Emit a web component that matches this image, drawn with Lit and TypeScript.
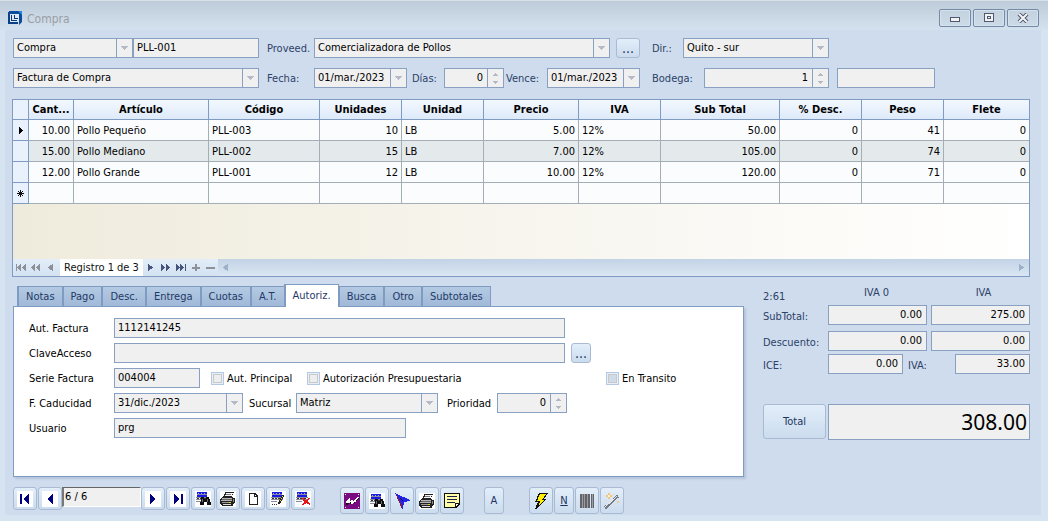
import { LitElement, html, svg, css, nothing } from "lit";
import { customElement } from "lit/decorators.js";
import { classMap } from "lit/directives/class-map.js";

type Row = [string, string, string, string, string, string, string, string, string, string, string];

const COLUMNS = ["Cant...", "Artículo", "Código", "Unidades", "Unidad", "Precio", "IVA", "Sub Total", "% Desc.", "Peso", "Flete"];
const WIDTHS = [45, 135, 111, 82, 82, 95, 82, 119, 82, 82, 85];
const NUMERIC = new Set([0, 3, 5, 7, 8, 9, 10]);
const ROWS: Row[] = [
  ["10.00", "Pollo Pequeño", "PLL-003", "10", "LB", "5.00", "12%", "50.00", "0", "41", "0"],
  ["15.00", "Pollo Mediano", "PLL-002", "15", "LB", "7.00", "12%", "105.00", "0", "74", "0"],
  ["12.00", "Pollo Grande", "PLL-001", "12", "LB", "10.00", "12%", "120.00", "0", "71", "0"],
];
const TABS = ["Notas", "Pago", "Desc.", "Entrega", "Cuotas", "A.T.", "Autoriz.", "Busca", "Otro", "Subtotales"];

const icon = (w: number, h: number, body: unknown) =>
  html`<svg width=${w} height=${h} viewBox="0 0 ${w} ${h}" shape-rendering="crispEdges" aria-hidden="true">${body}</svg>`;

const down = icon(7, 4, svg`<path d="M0 0h7v1H6v1H5v1H4v1H3V3H2V2H1V1H0z" fill="#b4bac8"/>`);
const tinyUp = icon(5, 3, svg`<path d="M2 0h1v1h1v1h1v1H0V2h1V1h1z" fill="#b4b8c4"/>`);
const tinyDown = icon(5, 3, svg`<path d="M0 0h5v1H4v1H3v1H2V2H1V1H0z" fill="#b4b8c4"/>`);

const grid = svg`<path d="M2 1h10v5H2z" fill="#1a1ae6"/><path d="M2 6h10v5H2z" fill="#fff"/><path d="M2 3h10v1H2zM1 6h12v1H1zM1 8h12v1H1zM1 10h6v1H1z" fill="#8a8a98"/><path d="M3 2h1v1H3zM6 2h1v1H6zM9 2h1v1H9z" fill="#9fb0ff"/><path d="M2 7h2v1H2zM5 7h2v1H5zM8 7h3v1H8z" fill="#333"/>`;
const sheet = svg`<path d="M0 0h16v16H0z" fill="#fff"/>`;
const binoculars = svg`<path d="M6 6h3v2h2V6h3v2h1v3h1v3h-4v-3h-3v3H5v-3h1z" fill="#101010"/><path d="M7 8h1v3H7zM12 8h1v3h-1z" fill="#6c6c6c"/>`;
const printer = svg`<path d="M5 1h9v1h-1v2h-1v2H3V5h1V3h1z" fill="#222"/><path d="M6 2h7v1h-1v2H5V4h1z" fill="#f4f4f4"/><path d="M6 3h5v1H6z" fill="#777"/><path d="M2 6h11v1h2v5h-1v1h-1v2H2v-1H1v-1H0V8h1V7h1z" fill="#222"/><path d="M2 7h10v1H2zM1 9h11v1H1z" fill="#b5b5b5"/><path d="M2 8h10v1H2z" fill="#666"/><path d="M2 11h9v1H2z" fill="#999"/><path d="M3 13h8v1H3z" fill="#ddd"/><path d="M13 8h1v3h-1z" fill="#888"/><path d="M9 11h2v1H9z" fill="#e0dc20"/>`;

const ICONS: Record<string, unknown> = {
  first: svg`${sheet}<path d="M3 3h2v10H3zM11 3h1v10h-1v-1h-1v-1H9v-1H8V9H7V7h1V6h1V5h1V4h1z" fill="#000080"/>`,
  prev: svg`${sheet}<path d="M10 3h1v10h-1v-1H9v-1H8v-1H7V9H6V7h1V6h1V5h1V4h1z" fill="#000080"/>`,
  next: svg`${sheet}<path d="M5 3h1v1h1v1h1v1h1v1h1v2H9v1H8v1H7v1H6v1H5z" fill="#000080"/>`,
  last: svg`${sheet}<path d="M4 3h1v1h1v1h1v1h1v1h1v2H8v1H7v1H6v1H5v1H4zM11 3h2v10h-2z" fill="#000080"/>`,
  find: svg`${sheet}${grid}${binoculars}`,
  print: svg`${sheet}${printer}`,
  blank: svg`${sheet}<path d="M4 2h6l3 3v9H4z" fill="#222"/><path d="M5 3h4v3h3v7H5z" fill="#fff"/><path d="M10 4h1v1h-1z" fill="#fff"/>`,
  edit: svg`${sheet}${grid}<path d="M12 4h2v2h-1v2h-1v2h-1v2h-1v1H8v-2h1V9h1V7h1V5h1z" fill="#222"/><path d="M12 5h1v1h-1zM11 7h1v1h-1zM10 9h1v1h-1z" fill="#f0e030"/><path d="M2 13h1v1H2zM4 13h1v1H4zM6 13h1v1H6z" fill="#333"/>`,
  remove: svg`${sheet}${grid}<path d="M7 7h2v1h1v1h2V8h1V7h2v1h-1v1h-1v2h1v1h1v2h-1v-1h-2v-1h-1v1H9v1H7v-1h1v-1h1v-2H8V8H7z" fill="#e8141c"/>`,
  chart: svg`<path d="M0 0h16v16H0z" fill="#780c80"/><path d="M1 1h1v1H1zM14 1h1v1h-1zM1 14h1v1H1zM14 14h1v1h-1z" fill="#fff"/><path d="M2 12l3-3 2 1 3-1 4-4" fill="none" stroke="#111" stroke-width="2"/><path d="M2 10l3-3v2l3-1v2l3-2 3-4" fill="none" stroke="#fff" stroke-width="1.5"/>`,
  pointer: svg`<path d="M1 0l15 7v1l-6 1-1 7H8L6 9z" fill="#2424e8"/><path d="M1 0l7 16v-4L4 4z" fill="#782050"/><path d="M3 3l6 4v2z" fill="#111160"/>`,
  note: svg`<path d="M0 0h16v11l-4 4H0z" fill="#111"/><path d="M1 1h14v9h-4v4H1z" fill="#ffffa8"/><path d="M12 11h2l-2 2z" fill="#fff"/><path d="M3 3h10v1H3zM3 6h10v1H3zM3 9h8v1H3z" fill="#1c1c50"/>`,
  bolt: svg`<path d="M6 0h9l-4 6h3L3 16H2l3-7H2z" fill="#111"/><path d="M7 1h6L9 7h3l-6 5 1-4H4z" fill="#ffee00"/>`,
  barcode: svg`<path d="M1 1h2v14H1zM4 1h1v14H4zM6 1h2v14H6zM9 1h2v14H9zM12 1h1v14h-1zM14 1h1v14h-1z" fill="#626468"/><path d="M3 1h1v14H3zM5 1h1v14H5zM8 1h1v14H8zM13 1h1v14h-1z" fill="#9a9ea4"/>`,
  wand: svg`<path d="M1 15L14 3" fill="none" stroke="#777c84" stroke-width="3"/><path d="M1 14L13 3" fill="none" stroke="#e4e6ea" stroke-width="1"/><path d="M4 0h2v2h2v2H6v2H4V4H2V2h2z" fill="#f7c27c"/><path d="M4 2h2v2H4z" fill="#fff3d0"/><path d="M13 8h2v2h-2zM9 1h1v1H9zM1 7h1v1H1z" fill="#f4c890"/>`,
};

const NAV: Record<string, unknown> = {
  first: icon(10, 7, svg`<path d="M0 0h1v7H0zM5 0v7L1 4V3zM10 0v7L6 4V3z" fill="currentColor"/>`),
  pageBack: icon(10, 7, svg`<path d="M4 0v7L0 4V3zM9 0v7L5 4V3z" fill="currentColor"/>`),
  back: icon(5, 7, svg`<path d="M5 0v7L0 4V3z" fill="currentColor"/>`),
  forward: icon(5, 7, svg`<path d="M0 0v7l5-3V3z" fill="currentColor"/>`),
  pageForward: icon(10, 7, svg`<path d="M0 0v7l4-3V3zM5 0v7l4-3V3z" fill="currentColor"/>`),
  last: icon(10, 7, svg`<path d="M0 0v7l4-3V3zM4 0v7l4-3V3zM9 0h1v7H9z" fill="currentColor"/>`),
  add: icon(9, 7, svg`<path d="M4 0h2v3h3v2H6v2H4V5H1V3h3z" fill="currentColor"/>`),
  drop: icon(10, 7, svg`<path d="M0 3h9v2H0z" fill="currentColor"/>`),
};

@customElement("app-root")
export class AppRoot extends LitElement {
  static styles = css`
    :host {
      display: flex;
      flex-direction: column;
      min-height: 100vh;
      box-sizing: border-box;
      background: #d6e4f1;
      color: #000;
      font: 11px/14px "DejaVu Sans Condensed", "DejaVu Sans", "Noto Sans", sans-serif;
    }
    * { box-sizing: border-box; }
    svg { display: block; flex: none; }
    button, input, select { font: inherit; color: inherit; margin: 0; padding: 0; border: 0; border-radius: 0; background: none; outline: 0; min-width: 0; }
    .title { display: flex; align-items: center; gap: 5px; height: 30px; padding: 5px 9px 0 8px; border-top: 1px solid #d8e0e8; background: linear-gradient(#becbd8, #d4e2ef); }
    .title h1 { flex: 1; margin: 0; padding-top: 1px; font: 12px/16px "DejaVu Sans Condensed", sans-serif; color: #9a9ea4; }
    .controls { display: flex; gap: 2px; }
    .controls button { display: grid; place-items: center; width: 32px; height: 18px; border: 1px solid #7489a8; border-radius: 2px; background: linear-gradient(#c4d1de, #cddbe8); box-shadow: inset 0 0 0 1px #d6e2ee; }
    .body { flex: 1; margin: 0 7px 6px 5px; padding: 8px 11px 1px 7px; background: #cfdcee; }
    .head { display: grid; grid-template-columns: 246px minmax(0, 1fr) 378px; gap: 10px 8px; padding-left: 1px; color: #2c4266; }
    .line { display: flex; align-items: center; }
    .head label, .totals label { color: #2c4266; white-space: nowrap; flex: none; }
    .head label { padding-top: 2px; }
    .mid { padding-right: 4px; }
    .w-lead { width: 47px; }
    .dir { width: 31px; }
    .bodega { width: 52px; }
    .dias { width: 32px; margin-left: 5px; }
    .vence { width: 41px; margin-left: 2px; }
    .extra { margin-left: 8px; }
    .box { display: flex; height: 20px; border: 1px solid #88a0c2; background: #f0f0f0; color: #000; min-width: 0; }
    .box input, .box select { flex: 1; width: 100%; padding: 0 3px 1px; }
    .box.num input { text-align: right; padding-right: 4px; }
    .pick { display: grid; grid-template-columns: minmax(0, 1fr) 16px; }
    .pick select, .pick input { grid-area: 1 / 1 / 2 / 3; appearance: none; padding-right: 18px; }
    .pick .arrow { grid-area: 1 / 2; display: grid; place-items: center; border-left: 1px solid #88a0c2; pointer-events: none; }
    .spin { display: flex; flex-direction: column; justify-content: center; align-items: center; gap: 5px; width: 16px; border-left: 1px solid #88a0c2; }
    .spin button { display: block; }
    .grow { flex: 1; }
    .w60 { width: 60px; } .w75 { width: 75px; } .w70 { width: 70px; } .w86 { width: 86px; } .w98 { width: 98px; }
    .w120 { width: 120px; } .w125 { width: 125px; } .w129 { width: 129px; } .w142 { width: 142px; } .w146 { width: 146px; } .w292 { width: 292px; } .w451 { width: 451px; }
    .btn { display: grid; place-items: center; flex: none; border: 1px solid #a9bad2; border-radius: 3px; background: linear-gradient(#e2eefa, #cbdcee); color: #1c3560; }
    .dots { width: 24px; height: 20px; margin-left: 6px; font-size: 14px; }
    .dots.small { width: 20px; }
    .gridbox { margin-top: 11px; border: 1px solid #7f9bc1; background: linear-gradient(90deg, #efebdc, #fff); }
    table { width: 100%; border-collapse: separate; border-spacing: 0; table-layout: fixed; }
    col.mark { width: 16px; }
    th { height: 20px; padding: 0; font-weight: bold; text-align: center; background: linear-gradient(#f3f8fe, #deeafa); border-right: 1px solid #7f9bc1; border-bottom: 1px solid #7f9bc1; white-space: nowrap; }
    td { height: 21px; padding: 2px 3px 0; background: #fafcfe; border-right: 1px solid #a3aeb6; border-bottom: 1px solid #a3aeb6; white-space: nowrap; }
    tr > :last-child { border-right: 0; }
    td.r { text-align: right; }
    tr.alt td { background: #e4eaec; }
    th.mark { height: 21px; background: #e8f1fc; }
    th.mark svg { margin: 0 auto; }
    thead th.mark { height: 20px; }
    .blank { height: 55px; }
    .nav { display: flex; align-items: center; height: 17px; background: linear-gradient(#e4eefa, #d3e1f1); color: #8d929a; }
    .nav button { display: grid; place-items: center; width: 15px; height: 17px; flex: none; }
    .nav .live { color: #46557c; }
    .nav output { flex: none; width: 83px; height: 17px; margin-left: 2px; line-height: 18px; text-align: center; background: #fff; color: #111; }
    .track { flex: 1; display: flex; align-items: center; justify-content: space-between; height: 17px; background: linear-gradient(#c3d3e6, #dae6f3); color: #9fb0c9; }
    .lower { display: grid; grid-template-columns: minmax(0, 1fr) 267px; gap: 19px; margin-top: 7px; padding-left: 1px; }
    .tabs { display: flex; align-items: flex-end; height: 22px; padding-left: 4px; }
    .tab { flex: none; height: 21px; padding: 0 7px; border: 1px solid #7f9bc1; border-left-width: 2px; margin-right: -1px; margin-bottom: -1px; background: linear-gradient(#b4cae3, #a0b9d8); color: #1f3a66; }
    .tab.on { height: 23px; border-bottom: 0; background: #fff; position: relative; }
    .panel { height: 171px; padding: 11px 15px 0; background: #fff; border: 1px solid #7f9bc1; box-shadow: 2px 2px 2px #b4c4da; }
    .form { display: flex; flex-direction: column; gap: 5px; }
    .form label { white-space: nowrap; padding-top: 2px; flex: none; }
    .form .lab { width: 85px; }
    .suc { width: 47px; margin-left: 6px; }
    .prio { width: 50px; margin-left: 9px; }
    .check { display: flex; align-items: center; gap: 3px; }
    .c1 { width: 96px; margin-left: 11px; }
    .c2 { width: 299px; }
    .check input { appearance: none; width: 13px; height: 13px; border: 1px solid #b4cae4; background: #ededed; box-shadow: inset 0 0 0 1px #e6eef8, inset 0 0 0 2px #c9c9c9; }
    .check.cool input { background: #cfdce8; }
    .totals { color: #2c4266; padding-top: 2px; }
    .heads { display: grid; grid-template-columns: 65px 97px 1fr; height: 19px; text-align: center; }
    .heads span:first-child { text-align: left; padding-top: 4px; }
    .heads span:last-child { padding-left: 12px; }
    .trow { display: flex; align-items: center; margin-bottom: 6px; }
    .trow > label:first-child { width: 65px; padding-top: 4px; }
    .trow .gap { margin-left: 4px; }
    .trow.tight { margin-bottom: 3px; }
    .trow .push { margin-left: auto; }
    .ivalab { margin-left: 5px; padding-top: 4px; }
    .total { display: flex; gap: 2px; margin-top: 30px; }
    .total .btn { width: 63px; height: 35px; }
    .total .box { flex: 1; height: 36px; }
    .total .box input { font: 21px/28px "Noto Sans", sans-serif; padding-right: 2px; }
    .tools { display: flex; align-items: flex-start; margin-top: 10px; padding-left: 1px; }
    .group { display: flex; gap: 1px; }
    .small .btn { width: 24px; height: 23px; }
    .big { margin-left: 25px; }
    .big .btn { width: 24px; height: 27px; }
    .big .btn.slim { width: 20px; }
    .big.solo { margin-left: 20px; }
    .pos { width: 79px; height: 20px; margin: 0 -1px; padding: 0 1px 1px; border: 1px solid #fff; border-top-color: #666; border-left: 2px solid #777; background: #f0f0f0; }
  `;

  private combo(id: string, value: string, cls: string, name: string | null = null) {
    return html`<span class="box pick ${cls}">
      <select id=${id} aria-label=${name ?? nothing}><option>${value}</option></select>
      <span class="arrow">${down}</span>
    </span>`;
  }

  private date(id: string, value: string, cls: string) {
    return html`<span class="box pick ${cls}"><input id=${id} .value=${value} /><span class="arrow">${down}</span></span>`;
  }

  private spin(id: string, value: string, cls: string) {
    return html`<span class="box num ${cls}"><input id=${id} .value=${value} />
      <span class="spin"><button aria-label="Más">${tinyUp}</button><button aria-label="Menos">${tinyDown}</button></span></span>`;
  }

  private field(id: string, value: string, cls: string, name: string | null = null) {
    return html`<span class="box ${cls}"><input id=${id} aria-label=${name ?? nothing} .value=${value} /></span>`;
  }

  private tool(name: string, label: string) {
    return html`<button class="btn" aria-label=${label}>${icon(16, 16, ICONS[name])}</button>`;
  }

  private navButton(name: string, label: string, live = false) {
    return html`<button class=${classMap({ live })} aria-label=${label}>${NAV[name]}</button>`;
  }

  private renderTitle() {
    return html`<header class="title">
      <svg width="14" height="14" viewBox="0 0 14 14" aria-hidden="true">
        <path d="M0 1h10v12H0z" fill="#0b3f86" /><path d="M2 3h9v8H2z" fill="#dce8f4" />
        <path d="M1 0h13v11l-3 3V3H1z" fill="#0a4c9c" /><path d="M10 0h4v4z" fill="#2b86d8" />
        <path d="M3 4h1v5h5v1H3zM6 4h1v3h3v1H6z" fill="#123a72" />
      </svg>
      <h1>Compra</h1>
      <div class="controls">
        <button aria-label="Minimizar">${icon(12, 10, svg`<path d="M1 4h10v5H1z" fill="#4e5870"/><path d="M2 5h8v3H2z" fill="#f2f2f2"/>`)}</button>
        <button aria-label="Maximizar">${icon(12, 10, svg`<path d="M1 0h10v9H1z" fill="#4e5870"/><path d="M2 1h8v7H2z" fill="#f2f2f2"/><path d="M4 3h4v3H4z" fill="#4e5870"/><path d="M5 4h2v1H5z" fill="#f2f2f2"/>`)}</button>
        <button aria-label="Cerrar"><svg width="12" height="10" viewBox="0 0 12 10" aria-hidden="true"><path d="M2 1l8 8M10 1L2 9" stroke="#4e5870" stroke-width="4" /><path d="M2 1l8 8M10 1L2 9" stroke="#f4f4f4" stroke-width="2" /></svg></button>
      </div>
    </header>`;
  }

  private renderHead() {
    return html`<section class="head">
      <div class="line">${this.combo("tipo", "Compra", "w120", "Tipo")}${this.field("numero", "PLL-001", "grow", "Número")}</div>
      <div class="line mid"><label class="w-lead" for="prov">Proveed.</label>${this.combo("prov", "Comercializadora de Pollos", "grow")}<button class="btn dots">...</button></div>
      <div class="line"><label for="dir" class="dir">Dir.:</label>${this.combo("dir", "Quito - sur", "w146")}</div>
      <div class="line">${this.combo("doc", "Factura de Compra", "grow", "Documento")}</div>
      <div class="line mid"><label class="w-lead" for="fecha">Fecha:</label>${this.date("fecha", "01/mar./2023", "grow")}
        <label class="dias" for="dias">Días:</label>${this.spin("dias", "0", "w60")}
        <label class="vence" for="vence">Vence:</label>${this.date("vence", "01/mar./2023", "grow")}</div>
      <div class="line"><label class="bodega" for="bodega">Bodega:</label>${this.spin("bodega", "1", "w125")}<span class="extra">${this.field("bodegaNombre", "", "w98", "Nombre de bodega")}</span></div>
    </section>`;
  }

  private renderGrid() {
    const star = icon(7, 7, svg`<path d="M3 0h1v7H3zM0 3h7v1H0zM1 1h1v1H1zM5 1h1v1H5zM1 5h1v1H1zM5 5h1v1H5zM2 2h3v3H2z" fill="#111"/>`);
    const mark = icon(4, 7, svg`<path d="M0 0h1v1h1v1h1v1h1v1H3v1H2v1H1v1H0z" fill="#000"/>`);
    return html`<section class="gridbox">
      <table>
        <colgroup><col class="mark" />${WIDTHS.map((w) => html`<col style="width:${w}px" />`)}</colgroup>
        <thead><tr><th class="mark"></th>${COLUMNS.map((c) => html`<th scope="col">${c}</th>`)}</tr></thead>
        <tbody>
          ${ROWS.map((r, i) => html`<tr class=${classMap({ alt: i === 1 })}><th class="mark">${i === 0 ? mark : nothing}</th>${r.map((v, c) => html`<td class=${classMap({ r: NUMERIC.has(c) })}>${v}</td>`)}</tr>`)}
          <tr><th class="mark">${star}</th>${COLUMNS.map(() => html`<td></td>`)}</tr>
        </tbody>
      </table>
      <div class="blank"></div>
      <nav class="nav" aria-label="Registros">
        ${this.navButton("first", "Primero")}${this.navButton("pageBack", "Página anterior")}${this.navButton("back", "Anterior")}
        <output>Registro 1 de 3</output>
        ${this.navButton("forward", "Siguiente", true)}${this.navButton("pageForward", "Página siguiente", true)}${this.navButton("last", "Último", true)}${this.navButton("add", "Agregar")}${this.navButton("drop", "Quitar")}
        <div class="track">${this.navButton("back", "Desplazar a la izquierda")}${this.navButton("forward", "Desplazar a la derecha")}</div>
      </nav>
    </section>`;
  }

  private renderPanel() {
    return html`<section>
      <div class="tabs" role="tablist">${TABS.map((t) => html`<button role="tab" class=${classMap({ tab: true, on: t === "Autoriz." })}>${t}</button>`)}</div>
      <div class="panel"><div class="form">
        <div class="line"><label class="lab" for="aut">Aut. Factura</label>${this.field("aut", "1112141245", "w451")}</div>
        <div class="line"><label class="lab" for="clave">ClaveAcceso</label>${this.field("clave", "", "w451")}<button class="btn dots small">...</button></div>
        <div class="line"><label class="lab" for="serie">Serie Factura</label>${this.field("serie", "004004", "w86")}
          <span class="check c1"><input id="c1" type="checkbox" /><label for="c1">Aut. Principal</label></span>
          <span class="check c2"><input id="c2" type="checkbox" /><label for="c2">Autorización Presupuestaria</label></span>
          <span class="check cool"><input id="c3" type="checkbox" /><label for="c3">En Transito</label></span></div>
        <div class="line"><label class="lab" for="cad">F. Caducidad</label>${this.date("cad", "31/dic./2023", "w129")}
          <label class="suc" for="suc">Sucursal</label>${this.combo("suc", "Matriz", "w142")}
          <label class="prio" for="prio">Prioridad</label>${this.spin("prio", "0", "w70")}</div>
        <div class="line"><label class="lab" for="usr">Usuario</label>${this.field("usr", "prg", "w292")}</div>
      </div></div>
    </section>`;
  }

  private renderTotals() {
    return html`<section class="totals">
      <div class="heads"><span>2:61</span><span>IVA 0</span><span>IVA</span></div>
      <div class="trow"><label for="s0">SubTotal:</label>${this.field("s0", "0.00", "num grow")}<span class="gap"></span>${this.field("s1", "275.00", "num grow", "SubTotal IVA")}</div>
      <div class="trow tight"><label for="d0">Descuento:</label>${this.field("d0", "0.00", "num grow")}<span class="gap"></span>${this.field("d1", "0.00", "num grow", "Descuento IVA")}</div>
      <div class="trow tight"><label for="ice">ICE:</label>${this.field("ice", "0.00", "num w75")}<label class="ivalab" for="iva">IVA:</label>${this.field("iva", "33.00", "num w75 push")}</div>
      <div class="total"><button class="btn">Total</button>${this.field("total", "308.00", "num", "Total")}</div>
    </section>`;
  }

  private renderTools() {
    return html`<footer class="tools">
      <div class="group small">${this.tool("first", "Primero")}${this.tool("prev", "Anterior")}
        <input class="pos" aria-label="Posición" .value=${"6 / 6"} />
        ${this.tool("next", "Siguiente")}${this.tool("last", "Último")}${this.tool("find", "Buscar")}${this.tool("print", "Imprimir")}${this.tool("blank", "Nuevo")}${this.tool("edit", "Editar")}${this.tool("remove", "Eliminar")}</div>
      <div class="group big">${this.tool("chart", "Gráfico")}${this.tool("find", "Buscar documento")}${this.tool("pointer", "Seleccionar")}${this.tool("print", "Imprimir documento")}${this.tool("note", "Nota")}</div>
      <div class="group big solo"><button class="btn slim">A</button></div>
      <div class="group big">${this.tool("bolt", "Procesar")}<button class="btn slim"><u>N</u></button>${this.tool("barcode", "Código de barras")}${this.tool("wand", "Asistente")}</div>
    </footer>`;
  }

  render() {
    return html`${this.renderTitle()}
      <main class="body">${this.renderHead()}${this.renderGrid()}
        <div class="lower">${this.renderPanel()}${this.renderTotals()}</div>
        ${this.renderTools()}
      </main>`;
  }
}
